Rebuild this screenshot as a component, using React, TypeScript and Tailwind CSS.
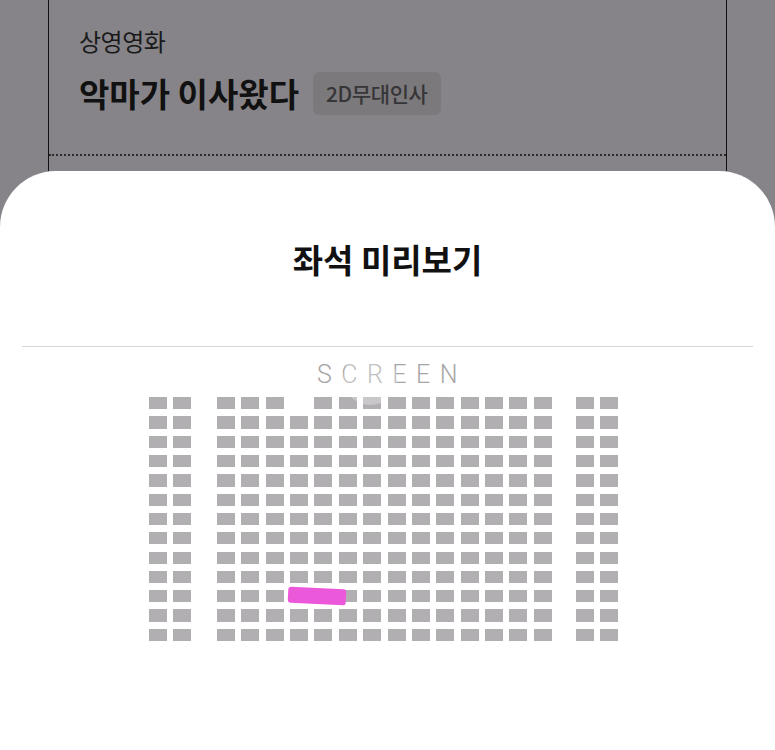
import React from 'react';

const ROWS = 13;
const MAIN_COLS = 14;

const Seat: React.FC<{ hidden?: boolean }> = ({ hidden }) => (
  <div className={hidden ? 'h-[12.3px] w-[18px]' : 'h-[12.3px] w-[18px] bg-[#b2afb3]'} />
);

const SeatRow: React.FC<{ index: number }> = ({ index }) => (
  <div className="flex">
    <div className="flex gap-x-[6.4px]">
      <Seat />
      <Seat />
    </div>
    <div className="ml-[25.4px] flex gap-x-[6.4px]">
      {Array.from({ length: MAIN_COLS }, (_, c) => (
        <Seat key={c} hidden={index === 0 && c === 3} />
      ))}
    </div>
    <div className="ml-[24.1px] flex gap-x-[6.4px]">
      <Seat />
      <Seat />
    </div>
  </div>
);

export default function App() {
  return (
    <div
      className="relative flex h-[750px] w-[775px] flex-col overflow-hidden bg-[#868488]"
      style={{ fontFamily: '"Noto Sans CJK KR", "Noto Sans", sans-serif' }}
    >
      {/* dimmed ticket card behind the sheet */}
      <div className="h-[171px] shrink-0 px-[48px]">
        <div className="h-full border-x-[1.5px] border-[#111]">
          <div className="h-[156px] border-b-2 border-dotted border-[#2b2a2c] pl-[30px] pt-[26px]">
            <div className="text-[24px] leading-[30px] tracking-[-0.5px] text-[#1a1a1b]">상영영화</div>
            <div className="mt-[16px] flex h-[43px] items-center">
              <span className="text-[33px] font-bold leading-none text-[#111]">악마가 이사왔다</span>
              <span className="ml-[14px] flex h-[43px] items-center rounded-[6px] bg-[#7b797c] px-[13px] text-[21px] font-medium tracking-[-0.4px] text-[#363537]">
                2D무대인사
              </span>
            </div>
          </div>
        </div>
      </div>

      {/* bottom sheet */}
      <div className="flex flex-1 flex-col rounded-t-[56px] bg-white">
        <h2 className="pt-[68px] text-center text-[33px] font-bold leading-[40px] text-[#111]">
          좌석 미리보기
        </h2>
        <div className="mx-[22px] mt-[67px] h-px bg-[#d6d6d6]" />
        <div
          className="mt-[13px] pl-[9px] text-center text-[25px] font-light leading-[30px] tracking-[9.5px] text-[#a6a6a6]"
          style={{ fontFamily: 'Roboto, "Liberation Sans", sans-serif' }}
        >
          SCREEN
        </div>

        <div className="relative ml-[149px] mt-[7px] flex w-fit flex-col gap-y-[7.03px]">
          {Array.from({ length: ROWS }, (_, r) => (
            <SeatRow key={r} index={r} />
          ))}
          <div className="absolute left-[139px] top-[191px] h-[16px] w-[58px] rotate-[3deg] rounded-[3px] bg-[#ec58da]" />
        </div>
      </div>

      <div className="absolute left-[343px] top-[351px] h-[54px] w-[54px] rounded-full bg-white/30" />
    </div>
  );
}
